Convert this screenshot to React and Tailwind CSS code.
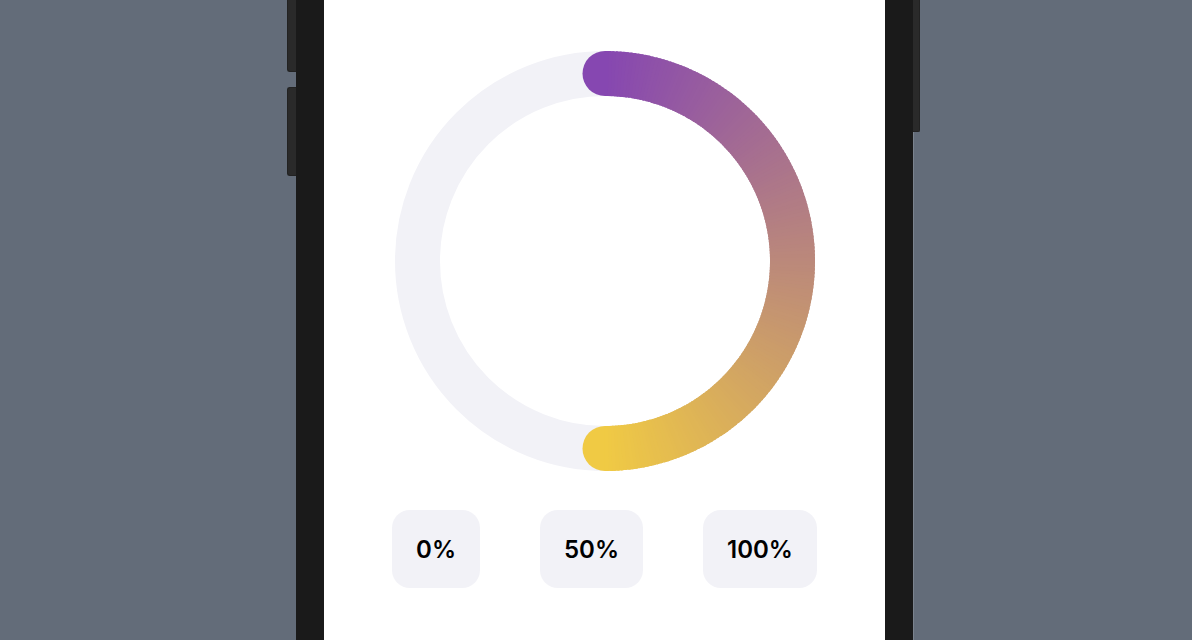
import React from "react";

const START = [0x86, 0x47, 0xb1];
const END = [0xf0, 0xca, 0x44];

function mix(t) {
  const c = START.map((s, i) => Math.round(s + (END[i] - s) * t));
  return `rgb(${c[0]},${c[1]},${c[2]})`;
}

function Ring() {
  const cx = 210;
  const cy = 210;
  const r = 187.5;
  const sw = 45;
  const N = 180;
  const pt = (deg) => {
    const a = (deg * Math.PI) / 180;
    return [cx + r * Math.sin(a), cy - r * Math.cos(a)];
  };
  const segs = [];
  for (let i = 0; i < N; i++) {
    const a0 = (180 * i) / N;
    const a1 = Math.min(180, (180 * (i + 1)) / N + 0.6);
    const [x0, y0] = pt(a0);
    const [x1, y1] = pt(a1);
    segs.push(
      <path
        key={i}
        d={`M ${x0} ${y0} A ${r} ${r} 0 0 1 ${x1} ${y1}`}
        stroke={mix((i + 0.5) / N)}
        strokeWidth={sw}
        fill="none"
        strokeLinecap="butt"
      />
    );
  }
  return (
    <svg width="420" height="420" viewBox="0 0 420 420">
      <circle cx={cx} cy={cy} r={r} stroke="#f2f2f7" strokeWidth={sw} fill="none" />
      <circle cx={cx} cy={cy - r} r={sw / 2} fill={mix(0)} />
      <circle cx={cx} cy={cy + r} r={sw / 2} fill={mix(1)} />
      {segs}
    </svg>
  );
}

function Chip({ label }) {
  return (
    <div className="h-[78px] px-[24px] rounded-[18px] bg-[#f2f2f7] flex items-center justify-center text-[24px] font-semibold text-black pt-[2px]">
      {label}
    </div>
  );
}

export default function App() {
  return (
    <div
      className="w-full h-[640px] bg-[#636c79] flex justify-start pl-[287px] overflow-hidden"
      style={{ fontFamily: "Inter, 'Noto Sans', sans-serif" }}
    >
      <div className="flex flex-row">
        <div className="w-[9px] flex flex-col">
          <div className="h-[72px] bg-[#2a2a2a] rounded-bl-[3px] border-l border-b border-[#222]" />
          <div className="h-[89px] mt-[15px] bg-[#2a2a2a] rounded-l-[3px] border-l border-y border-[#222]" />
        </div>
        <div className="w-[618px] h-[640px] bg-[#1a1a1a] px-[28px] border-r border-[#7b838e]">
          <div className="h-full bg-white flex flex-col items-center pt-[51px]">
            <Ring />
            <div className="mt-[39px] flex flex-row gap-[60px]">
              <Chip label="0%" />
              <Chip label="50%" />
              <Chip label="100%" />
            </div>
          </div>
        </div>
        <div className="w-[7px] flex flex-col -ml-[1px]">
          <div className="h-[132px] bg-[#2a2a2a] rounded-br-[2px] border-r border-b border-[#222]" />
        </div>
      </div>
    </div>
  );
}
